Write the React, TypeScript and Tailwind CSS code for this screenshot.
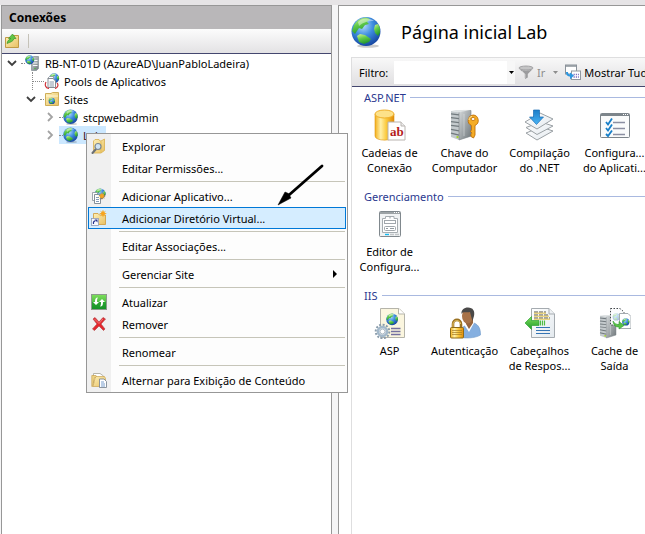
import type { ReactNode } from "react";

type IconProps = { className?: string };

function Svg({ box, className, children }: { box: number; className?: string; children: ReactNode }) {
  return (
    <svg viewBox={`0 0 ${box} ${box}`} className={`shrink-0 ${className ?? (box === 32 ? "size-8" : "size-4")}`} aria-hidden="true">
      {children}
    </svg>
  );
}

function Defs() {
  return (
    <svg className="absolute size-0" aria-hidden="true">
      <defs>
        <radialGradient id="ocean" cx="0.4" cy="0.3" r="0.75">
          <stop offset="0" stopColor="#b5dcfc" />
          <stop offset="0.45" stopColor="#3f8ee0" />
          <stop offset="1" stopColor="#123f9c" />
        </radialGradient>
        <linearGradient id="land" x1="0" y1="0" x2="0.4" y2="1">
          <stop offset="0" stopColor="#def59a" />
          <stop offset="0.5" stopColor="#62cc48" />
          <stop offset="1" stopColor="#259632" />
        </linearGradient>
        <linearGradient id="folder" x1="0" y1="0" x2="1" y2="1">
          <stop offset="0" stopColor="#fdf0b8" />
          <stop offset="1" stopColor="#e8c062" />
        </linearGradient>
        <linearGradient id="gold" x1="0" y1="0" x2="1" y2="0">
          <stop offset="0" stopColor="#f3b01c" />
          <stop offset="0.3" stopColor="#fff0a8" />
          <stop offset="0.6" stopColor="#fbc93c" />
          <stop offset="1" stopColor="#e08a0a" />
        </linearGradient>
        <linearGradient id="steel" x1="0" y1="0" x2="1" y2="1">
          <stop offset="0" stopColor="#d4d8da" />
          <stop offset="1" stopColor="#6f777b" />
        </linearGradient>
        <linearGradient id="sky" x1="0" y1="0" x2="0" y2="1">
          <stop offset="0" stopColor="#1c7ec8" />
          <stop offset="1" stopColor="#4ab4f4" />
        </linearGradient>
        <linearGradient id="paper" x1="0" y1="0" x2="1" y2="1">
          <stop offset="0" stopColor="#ffffff" />
          <stop offset="1" stopColor="#e3e9ee" />
        </linearGradient>
        <linearGradient id="leaf" x1="0" y1="0" x2="0" y2="1">
          <stop offset="0" stopColor="#7ee05c" />
          <stop offset="1" stopColor="#1f9a2a" />
        </linearGradient>
        <g id="globe">
          <circle cx="15" cy="15.500" r="14.500" fill="url(#ocean)" />
          <path d="M3 9C6 4 10 2 15 1.500L19 3L16 6L18 8L14 9L11 13L8 12L6 15L4 18L1 15Z" fill="url(#land)" />
          <path d="M6 20L9 18L14 19L20 23L18 26L13 28L8 26Z" fill="url(#land)" />
          <path d="M24 9L27 8L29 12V17L27 20L24 17L23 13Z" fill="url(#land)" />
          <path d="M7 6C11 1.500 19 1.500 23 5C18 5 12 6 8 10Z" fill="#ffffff" opacity=".45" />
        </g>
      </defs>
    </svg>
  );
}

const MiniGlobe = ({ x, y, s }: { x: number; y: number; s: number }) => (
  <g transform={`translate(${x} ${y}) scale(${s / 32})`}>
    <use href="#globe" />
  </g>
);

const GlobeIcon = ({ className }: IconProps) => (
  <Svg box={32} className={className}>
    <ellipse cx="17" cy="30" rx="11" ry="1.800" fill="#00000033" />
    <use href="#globe" />
  </Svg>
);

const UpFolderIcon = () => (
  <Svg box={16}>
    <path d="M1.500 4.500H8L9 2.500H14.500V14.500H1.500Z" fill="url(#folder)" stroke="#c09a45" />
    <path d="M3 10.500C3.500 7 6 6 7 5.500H4.500L8.500 1L12 5.500H10C9 9 6 9 3 10.500Z" fill="#62c545" stroke="#2e8f24" strokeWidth=".6" />
  </Svg>
);

const ServerIcon = () => (
  <Svg box={16}>
    <path d="M6.500 3L8.500 1.500H13.500V13.500L11.500 15.500H6.500Z" fill="url(#steel)" stroke="#8b959b" strokeWidth=".8" />
    <path d="M8 5.500H12.500M8 8H12.500M8 10.500H12.500" stroke="#f7fafb" />
    <circle cx="10" cy="13.500" r=".8" fill="#48b848" />
    <MiniGlobe x={0} y={0} s={10} />
  </Svg>
);

const PoolsIcon = () => (
  <Svg box={16}>
    <MiniGlobe x={5} y={0} s={11} />
    <path d="M3.500 5.500L5.500 3.500H9.500V12" fill="#fff" stroke="#8b9299" strokeWidth=".8" />
    <path d="M4 5.500H9L11.500 8V14.500H4Z" fill="#fff" stroke="#788089" strokeWidth=".9" />
    <path d="M5.500 9H10M5.500 11H10M5.500 13H10" stroke="#6c7f95" strokeWidth=".8" />
    <path d="M2 9C.5 12 1.500 15 5 15.500M13 10C15 12 13.500 15 11 15.500" fill="none" stroke="#d0353a" strokeWidth="1.200" />
  </Svg>
);

const SitesIcon = () => (
  <Svg box={16}>
    <path d="M1.500 2.500H7L8.500 1.500H14.500V14.500H1.500Z" fill="url(#folder)" stroke="#cfae58" />
    <path d="M2 5H14" stroke="#fff7d5" />
    <MiniGlobe x={4.5} y={6.5} s={7} />
  </Svg>
);

const ExploreIcon = () => (
  <Svg box={16}>
    <path d="M2.500 3L4 1.500H8L9 3H10L13.500 1V12.500L10 15H2.500Z" fill="url(#folder)" stroke="#d8b04e" strokeWidth=".8" />
    <path d="M10 3.500V14.500" stroke="#e3bd5a" />
    <path d="M5 11L1.500 15" stroke="#6b7177" strokeWidth="2" strokeLinecap="round" />
    <circle cx="7" cy="8.500" r="3" fill="#cfe4f4" stroke="#7c8891" strokeWidth="1.200" />
  </Svg>
);

const Spark = ({ x, y }: { x: number; y: number }) => (
  <path
    transform={`translate(${x} ${y})`}
    d="M0-4L.9-1.500L3-3L1.500-.8L4 0L1.500.8L3 3L.9 1.500L0 4L-.9 1.500L-3 3L-1.500.8L-4 0L-1.500-.8L-3-3L-.9-1.500Z"
    fill="#f7a51e"
  />
);

const AddAppIcon = () => (
  <Svg box={16}>
    <MiniGlobe x={3.5} y={0} s={12} />
    <path d="M1.500 4.500H6.500V12.500H1.500Z" fill="#fff" stroke="#88919a" strokeWidth=".8" />
    <path d="M3.500 6.500H7.500L9.500 8.500V15.500H3.500Z" fill="#fff" stroke="#78828c" strokeWidth=".9" />
    <path d="M5 9.500H8M5 11.500H8M5 13.500H8" stroke="#6782a4" strokeWidth=".8" />
    <Spark x={11} y={8} />
  </Svg>
);

const AddDirIcon = () => (
  <Svg box={16}>
    <path d="M2.500 3.500H7L8.500 5H14.500V14.500H2.500Z" fill="url(#folder)" stroke="#d2a247" strokeWidth=".9" />
    <Spark x={12} y={3.5} />
    <rect x=".5" y="8.500" width="7" height="7" fill="#f5f8ff" stroke="#8f9bb5" strokeWidth=".8" />
    <path d="M2.500 14C2 11.500 3.500 10.800 4.500 11" fill="none" stroke="#26358f" strokeWidth="1.200" />
    <path d="M3.500 9.500H6.500V12.500Z" fill="#26358f" />
  </Svg>
);

const RefreshIcon = () => (
  <Svg box={16}>
    <rect x=".5" y=".5" width="15" height="15" fill="url(#leaf)" stroke="#8c9a8c" />
    <path d="M1 8H15V15H1Z" fill="#078a22" opacity=".45" />
    <path d="M7 3.500C4.500 3.500 4 5 4 8H2L5 11L8 8H6C6 6 6 5 7 3.500Z" fill="#fff" />
    <path d="M9 12.500C11.500 12.500 12 11 12 8H14L11 5L8 8H10C10 10 10 11 9 12.500Z" fill="#fff" />
  </Svg>
);

const RemoveIcon = () => (
  <Svg box={16}>
    <path d="M2 3L4 1.500L8 6L12 1.500L14.500 3L10 8L14 13L12.500 14.500L8 10L3.500 14.500L1.500 13L6 8Z" fill="#e4262c" stroke="#b5474b" strokeWidth=".7" />
    <path d="M3.500 3L8 7.500L12 3" fill="none" stroke="#f58a8a" strokeWidth=".8" />
  </Svg>
);

const ContentIcon = () => (
  <Svg box={16}>
    <path d="M2.500 1.500H9L12.500 4V11H2.500Z" fill="#fff" stroke="#a5a397" strokeWidth=".8" />
    <path d="M.8 3.500H5L6 5.500H3.500L1.500 14.500H.8Z" fill="#eed383" stroke="#c9a353" strokeWidth=".7" />
    <path d="M4 6.500L5 4.500H13.500L14.500 6.500V14.500H2Z" fill="url(#folder)" stroke="#c9a353" strokeWidth=".7" />
    <path d="M8.500 7H13L15.500 9.500V15.500H8.500Z" fill="#fff" stroke="#7e8994" strokeWidth=".9" />
    <path d="M10 10H13M10 12H14M10 14H14" stroke="#5686c0" strokeWidth=".8" />
  </Svg>
);

const FunnelIcon = () => (
  <Svg box={16}>
    <ellipse cx="8" cy="4" rx="7" ry="2" fill="#c4c4c5" stroke="#969698" strokeWidth=".8" />
    <path d="M1.500 5.200C5 6.800 11 6.800 14.500 5.200L9.800 10V13.500L7 15V10Z" fill="#9c9c9e" />
    <path d="M4 7L7 10V14" fill="none" stroke="#c9c9ca" />
  </Svg>
);

const ShowAllIcon = () => (
  <Svg box={16}>
    <rect x=".5" y="1" width="11" height="9" fill="#fff" stroke="#8a9299" />
    <path d="M.5 2H11.500" stroke="#8a9299" strokeWidth="1.500" />
    <rect x="6.500" y="7" width="9" height="8.500" fill="#fff" stroke="#9199a0" />
    <path d="M8.500 10.500H14M8.500 13H14" stroke="#7d6fc0" strokeWidth="1.400" strokeDasharray="1.300 1" />
    <path d="M1 8C1 11.500 3 12.500 5 12.500V15.500L9 11.500L5 8.500V10.500C3.500 10.500 3 9.500 3 8Z" fill="#2e97e0" />
  </Svg>
);

const Tower = ({ x, y, w, h }: { x: number; y: number; w: number; h: number }) => (
  <g transform={`translate(${x} ${y}) scale(${w / 20} ${h / 31})`}>
    <path d="M0 1L8 2V31L0 28Z" fill="#c4cacd" />
    <path d="M0 4L8 5M0 8L8 9M0 12L8 13M0 16L8 17M0 20L8 21.500M0 24L8 26" stroke="#727a7e" strokeWidth="1.300" />
    <path d="M8 2L12 .5H20V27L8 31Z" fill="url(#steel)" stroke="#7b8387" strokeWidth=".6" />
    <path d="M0 1L5 0H19.500L12 1.500L8 2.500Z" fill="#dfe3e4" />
    <path d="M13 4V27" stroke="#e6eaeb" opacity=".5" />
    <circle cx="6.500" cy="28" r="1.200" fill="#a5d32b" />
  </g>
);

const DatabaseIcon = () => (
  <Svg box={32}>
    <path d="M1 5V27C1 32.500 20 32.500 20 27V5Z" fill="url(#gold)" stroke="#dd960f" strokeWidth=".6" />
    <ellipse cx="10.500" cy="5" rx="9.500" ry="4" fill="#fde28a" stroke="#f0b02a" />
    <path d="M14 13H27L31 17V31H14Z" fill="#fff" stroke="#b9b4b0" />
    <path d="M27 13V17H31" fill="#ececec" stroke="#b9b4b0" />
    <text x="16" y="27" fontFamily="Liberation Serif, serif" fontWeight="700" fontSize="13" fill="#b51c1c">ab</text>
  </Svg>
);

const KeyIcon = () => (
  <Svg box={32}>
    <Tower x={2} y={1} w={20} h={30} />
    <path fillRule="evenodd" d="M24 6A5.500 5.500 0 0 1 26 16.500V26L24.500 29L22 27.500V25.500L23 24L21.500 22.500L22.500 21V16.500A5.500 5.500 0 0 1 24 6ZM24 8.500A2 1.500 0 1 0 24.100 8.500Z" fill="#f5ac24" stroke="#bf6f0a" strokeWidth=".9" />
    <path d="M20 11C20 8 22 7.500 23 7.500" stroke="#ffe9a0" fill="none" />
  </Svg>
);

const CompileIcon = () => (
  <Svg box={32}>
    <path d="M2 24L17 18L29 22L13 31Z" fill="url(#paper)" stroke="#9ba1a5" />
    <path d="M2 18.500L17 13L29 17L13 25.500Z" fill="url(#paper)" stroke="#9ba1a5" />
    <path d="M1 13L16 4L29 10L13 20Z" fill="url(#paper)" stroke="#9ba1a5" />
    <path d="M9.500 1H15.500V8H19.500L12.500 15.500L5.500 8H9.500Z" fill="url(#sky)" stroke="#1a6db4" strokeWidth=".7" />
  </Svg>
);

const SettingsIcon = () => (
  <Svg box={32}>
    <rect x="1.500" y="4.500" width="29" height="24" rx="1" fill="#fafbfb" stroke="#7d858b" />
    <path d="M2 6H30" stroke="#7d858b" strokeWidth="2" />
    <path d="M24 5.500H29" stroke="#fff" strokeDasharray="1 1" />
    <path d="M14 13.500H26M14 19.500H26M14 25.500H26" stroke="#8b8fa2" strokeWidth="1.300" />
    <path d="M7 13L9 15.500L13 9.500M7 19L9 21.500L13 15.500M7 25L9 27L13 21.500" fill="none" stroke="#187fc8" strokeWidth="1.800" />
  </Svg>
);

const EditorIcon = () => (
  <Svg box={32}>
    <rect x="5.500" y="3.500" width="21" height="25" rx="1" fill="#f1f3f4" stroke="#80888d" />
    <path d="M6 5H26" stroke="#80888d" strokeWidth="1.500" />
    <path d="M20 4.500H25" stroke="#fff" strokeDasharray="1 1" />
    <path d="M8.500 10.500H11.500V8.500H20V10.500H23.500V24.500H8.500Z" fill="#fff" stroke="#a7adb1" />
    <rect x="10.500" y="12.500" width="11" height="3" fill="#fff" stroke="#a1a7ac" />
    <rect x="10.500" y="18.500" width="11" height="4" rx="1" fill="#fff" stroke="#a1a7ac" />
    <path d="M12 20.500H14M16 20.500H20M16 8.500V10.500" stroke="#929aa0" />
    <path d="M11 26.500H15" stroke="#16b8ee" strokeWidth="1.400" />
    <path d="M16 26.500H20M21 26.500H25" stroke="#c1c5c8" strokeWidth="1.400" />
  </Svg>
);

const AspIcon = () => (
  <Svg box={32}>
    <path d="M6.500 1.500H25L30.500 7V30.500H6.500Z" fill="#fbf6df" stroke="#b5b4aa" />
    <path d="M24.500 1.500V7H30.500" fill="#fff" stroke="#b5b4aa" />
    <MiniGlobe x={12} y={6} s={13} />
    <path d="M17 21.500H26.500M17 24.500H26.500M17 27.500H26.500" stroke="#7470a0" strokeWidth="1.300" />
    <circle cx="8.500" cy="24.500" r="6.800" fill="none" stroke="#8b9dac" strokeWidth="2" strokeDasharray="2 1.550" />
    <circle cx="8.500" cy="24.500" r="4.500" fill="#eef2f5" stroke="#a3b8ca" strokeWidth="2.600" />
    <circle cx="8.500" cy="24.500" r="2.500" fill="#fff" stroke="#8799a8" strokeWidth=".7" />
  </Svg>
);

const AuthIcon = () => (
  <Svg box={32}>
    <path d="M10 30C10 22 13 20 18 18L25 16C30 18 31.500 22 31.500 28C26 31.500 15 31.500 10 30Z" fill="#85afe0" stroke="#6e98ca" strokeWidth=".6" />
    <path d="M16 19L20 25L25 16L23 13H16Z" fill="#fff" />
    <path d="M17 17L20 22L24 16V12H16Z" fill="#96643d" />
    <ellipse cx="18.500" cy="9" rx="5.500" ry="7.500" fill="#a87248" />
    <path d="M12.500 7C12 3 15 .5 19 .5C24 .5 26 4 25 9L23.500 14L22 9L21 5C17 6 14 4 12.500 7Z" fill="#4a4948" />
    <path d="M4 21V17C4 11.500 12 11.500 12 17V21" fill="none" stroke="#9a7122" strokeWidth="2.600" />
    <path d="M4 21V17C4 12.500 11.500 12.500 11.500 17" fill="none" stroke="#e7c565" strokeWidth="1" />
    <rect x="1.500" y="20.500" width="13" height="10.500" rx="1" fill="url(#gold)" stroke="#8e6a17" />
    <path d="M3 23.500H13M3 25.500H13M3 27.500H13" stroke="#a17a25" strokeWidth=".7" />
  </Svg>
);

const HeadersIcon = () => (
  <Svg box={32}>
    <path d="M7.500 1.500H25L30.500 7V30.500H7.500Z" fill="url(#paper)" stroke="#a5abb0" />
    <path d="M25 1.500V7H30.500" fill="#eef1f4" stroke="#a5abb0" />
    <path d="M10 5H22M10 8H25M10 11H26" stroke="#55544c" strokeWidth="1" strokeDasharray="4 1" />
    <path d="M10 6.200H22M10 9.200H25M10 12.200H26" stroke="#e6c64e" />
    <path d="M12 20.500H26M12 23.500H26M12 26.500H26" stroke="#3675b4" strokeWidth="1.200" />
    <path d="M1 16L7.500 9.500V13.500H15V18.500H7.500V22.500Z" fill="url(#leaf)" stroke="#31a436" strokeWidth=".7" />
    <path d="M16.500 13.500V18.500M18.500 13.500V18.500M20.500 13.500V18.500" stroke="#4fbd45" strokeWidth="1.200" />
  </Svg>
);

const CacheIcon = () => (
  <Svg box={32}>
    <Tower x={1} y={8} w={16} h={23} />
    <path d="M11.500 1.500H21L25 5V18H11.500Z" fill="#fbfcfd" stroke="#41474a" strokeDasharray="1.500 1.500" />
    <g opacity=".35"><MiniGlobe x={13.5} y={6} s={8} /></g>
    <path d="M20.500 6.500H29L32 9.500V21.500H20.500Z" fill="#fff" stroke="#9ba3a8" strokeWidth=".9" />
    <MiniGlobe x={23} y={11} s={8} />
    <path d="M14 14C15.500 17 18 17.500 20 17.500V14.500L25 18.500L20 22V20C16 20 14.500 18 14 14Z" fill="#5ac245" stroke="#2f9e32" strokeWidth=".6" />
  </Svg>
);

function Chevron({ open, label }: { open?: boolean; label: string }) {
  return (
    <button type="button" aria-label={label} className="flex w-[18px] shrink-0 justify-center">
      <svg viewBox="0 0 10 10" className="size-[10px]" fill="none" stroke={open ? "#3f3f3f" : "#a3a3a3"} strokeWidth="1.800" aria-hidden="true">
        <path d={open ? "M1 3L5 7L9 3" : "M3 1L7 5L3 9"} />
      </svg>
    </button>
  );
}

const Dots = () => <span className="w-1 shrink-0 border-t border-dotted border-[#8a8a8a]" />;
const treeRow = "flex h-[18px] items-center";

function Tree() {
  return (
    <ul role="tree" aria-label="Conexões" className="whitespace-nowrap pl-px text-black">
      <li role="treeitem" aria-expanded="true">
        <div className={treeRow}>
          <Chevron open label="Recolher servidor" />
          <Dots />
          <ServerIcon />
          <span className="pl-1">RB-NT-01D (AzureAD\JuanPabloLadeira)</span>
        </div>
        <ul role="group" className="pl-[19px]">
          <li role="treeitem" className={treeRow}>
            <span className="flex h-full w-[22px] shrink-0 items-center pl-[10px]">
              <span className="h-full border-l border-dotted border-[#8a8a8a]" />
              <span className="grow border-t border-dotted border-[#8a8a8a]" />
            </span>
            <PoolsIcon />
            <span className="pl-1">Pools de Aplicativos</span>
          </li>
          <li role="treeitem" aria-expanded="true">
            <div className={treeRow}>
              <Chevron open label="Recolher Sites" />
              <Dots />
              <SitesIcon />
              <span className="pl-1">Sites</span>
            </div>
            <ul role="group" className="pl-[19px]">
              <li role="treeitem" className={treeRow}>
                <Chevron label="Expandir stcpwebadmin" />
                <Dots />
                <GlobeIcon className="size-4" />
                <span className="pl-1">stcpwebadmin</span>
              </li>
              <li role="treeitem" aria-selected="true" className={treeRow}>
                <Chevron label="Expandir Lab" />
                <span className="flex h-full items-center bg-[#cce8ff] pr-1">
                  <Dots />
                  <GlobeIcon className="size-4" />
                  <span className="pl-1 text-[#401020]">Lab</span>
                </span>
              </li>
            </ul>
          </li>
        </ul>
      </li>
    </ul>
  );
}

type MenuEntry = { text: string; icon?: ReactNode; active?: boolean; sub?: boolean };

const menuGroups: MenuEntry[][] = [
  [{ text: "Explorar", icon: <ExploreIcon /> }, { text: "Editar Permissões..." }],
  [
    { text: "Adicionar Aplicativo...", icon: <AddAppIcon /> },
    { text: "Adicionar Diretório Virtual...", icon: <AddDirIcon />, active: true },
  ],
  [{ text: "Editar Associações..." }],
  [{ text: "Gerenciar Site", sub: true }],
  [
    { text: "Atualizar", icon: <RefreshIcon /> },
    { text: "Remover", icon: <RemoveIcon /> },
  ],
  [{ text: "Renomear" }],
  [{ text: "Alternar para Exibição de Conteúdo", icon: <ContentIcon /> }],
];

function ContextMenu() {
  return (
    <div
      role="menu"
      className="absolute left-[86px] top-[133px] w-[262px] border border-[#979797] bg-[#fdfdfd] bg-[linear-gradient(90deg,#f0f0f0_24px,#fdfdfd_24px)] p-px"
    >
      {menuGroups.map((group, i) => (
        <div key={i} role="group">
          {i > 0 && <div role="separator" className="my-[2px] ml-[31px] mr-px h-[2px] border-t border-[#c6c5b9]" />}
          {group.map((item) => (
            <button
              key={item.text}
              type="button"
              role="menuitem"
              className={`flex h-[22px] w-full items-center whitespace-nowrap border pl-[2px] pr-2 text-left ${
                item.active ? "border-[#0078d7] bg-[#d5edff]" : "border-transparent"
              }`}
            >
              <span className="w-[31px] shrink-0">{item.icon}</span>
              <span className="grow">{item.text}</span>
              {item.sub && (
                <svg viewBox="0 0 4 8" className="h-2 w-1" aria-hidden="true">
                  <path d="M0 0L4 4L0 8Z" fill="#000" />
                </svg>
              )}
            </button>
          ))}
        </div>
      ))}
      <svg viewBox="0 0 48 44" className="absolute left-[190px] top-[28px] h-11 w-12" aria-hidden="true">
        <path d="M45 4L12 33" stroke="#000" strokeWidth="2.800" strokeLinecap="round" />
        <path d="M1 43L8 30L11.500 31.500L14 36Z" fill="#000" stroke="#000" strokeWidth=".5" />
      </svg>
    </div>
  );
}

type Feature = { lines: string[]; icon: ReactNode };

const sections: { title: string; items: Feature[] }[] = [
  {
    title: "ASP.NET",
    items: [
      { lines: ["Cadeias de", "Conexão"], icon: <DatabaseIcon /> },
      { lines: ["Chave do", "Computador"], icon: <KeyIcon /> },
      { lines: ["Compilação", "do .NET"], icon: <CompileIcon /> },
      { lines: ["Configura...", "do Aplicati..."], icon: <SettingsIcon /> },
    ],
  },
  { title: "Gerenciamento", items: [{ lines: ["Editor de", "Configura..."], icon: <EditorIcon /> }] },
  {
    title: "IIS",
    items: [
      { lines: ["ASP"], icon: <AspIcon /> },
      { lines: ["Autenticação"], icon: <AuthIcon /> },
      { lines: ["Cabeçalhos", "de Respos..."], icon: <HeadersIcon /> },
      { lines: ["Cache de", "Saída"], icon: <CacheIcon /> },
    ],
  },
];

const Caret = ({ color }: { color: string }) => (
  <svg viewBox="0 0 5 3" className="h-[3px] w-[5px]" aria-hidden="true">
    <path d="M0 0H5L2.500 3Z" fill={color} />
  </svg>
);

export default function App() {
  return (
    <div className="relative flex h-screen gap-[6px] overflow-hidden border-t-[5px] border-[#e6e4e6] bg-[#f5f5f6] pl-px font-['Noto_Sans','Open_Sans',sans-serif] text-[11px] leading-[15px] text-black">
      <Defs />
      <aside className="flex w-[331px] shrink-0 flex-col border border-b-0 border-[#979797] bg-white">
        <h2 className="bg-[#b9b7b9] px-[7px] py-1 text-[12px] font-bold">Conexões</h2>
        <div className="flex h-[25px] items-center gap-2 border-b border-[#44476f] bg-linear-to-b from-[#fcfcfc] to-[#e3e2e4] pl-[2px]">
          <button type="button" aria-label="Subir um nível">
            <UpFolderIcon />
          </button>
          <span className="h-[14px] w-px bg-[#c5c2b8]" />
        </div>
        <Tree />
      </aside>

      <main className="flex min-w-0 grow flex-col border-l border-t border-[#979797] bg-white pl-3">
        <header className="flex h-[51px] items-center gap-[18px]">
          <GlobeIcon className="size-8" />
          <h1 className="whitespace-nowrap text-[18px] leading-6">Página inicial Lab</h1>
        </header>
        <div className="flex grow flex-col border-l border-t border-[#dededf]">
          <div className="flex h-[29px] shrink-0 items-center whitespace-nowrap border-b border-[#44476f] bg-linear-to-b from-[#f8f8f8] to-[#e0dfe1] pl-[7px]">
            <label htmlFor="filter" className="w-[35px] shrink-0">Filtro:</label>
            <div className="flex h-[23px] w-[121px] shrink-0 items-center bg-white">
              <input id="filter" type="text" className="min-w-0 grow bg-transparent px-1 outline-none" />
              <button type="button" aria-label="Filtros recentes" className="flex h-full w-3 items-center justify-center bg-[#f7f7f7]">
                <Caret color="#000" />
              </button>
            </div>
            <button type="button" className="flex shrink-0 items-center gap-[3px] pl-[3px] text-[#8d8d8d]">
              <FunnelIcon />
              Ir
            </button>
            <button type="button" aria-label="Opções de Ir" className="flex w-5 shrink-0 justify-center">
              <Caret color="#8d8d8d" />
            </button>
            <button type="button" className="flex shrink-0 items-center gap-[3px]">
              <ShowAllIcon />
              Mostrar Tudo
            </button>
          </div>
          {sections.map((section) => (
            <section key={section.title} className="pb-[11px]">
              <h3 className="flex h-5 items-center gap-1 pl-3 text-[#2b3990]">
                {section.title}
                <span className="h-px grow bg-[#a9b9e0]" />
              </h3>
              <div className="flex overflow-hidden pt-[2px]">
                {section.items.map((item) => (
                  <button key={item.lines.join(" ")} type="button" className="flex w-[75px] shrink-0 flex-col items-center gap-1">
                    {item.icon}
                    <span className="whitespace-nowrap text-center">
                      {item.lines.map((line) => (
                        <span key={line} className="block">{line}</span>
                      ))}
                    </span>
                  </button>
                ))}
              </div>
            </section>
          ))}
        </div>
      </main>
      <div className="absolute -top-[5px] left-0">
        <ContextMenu />
      </div>
    </div>
  );
}
